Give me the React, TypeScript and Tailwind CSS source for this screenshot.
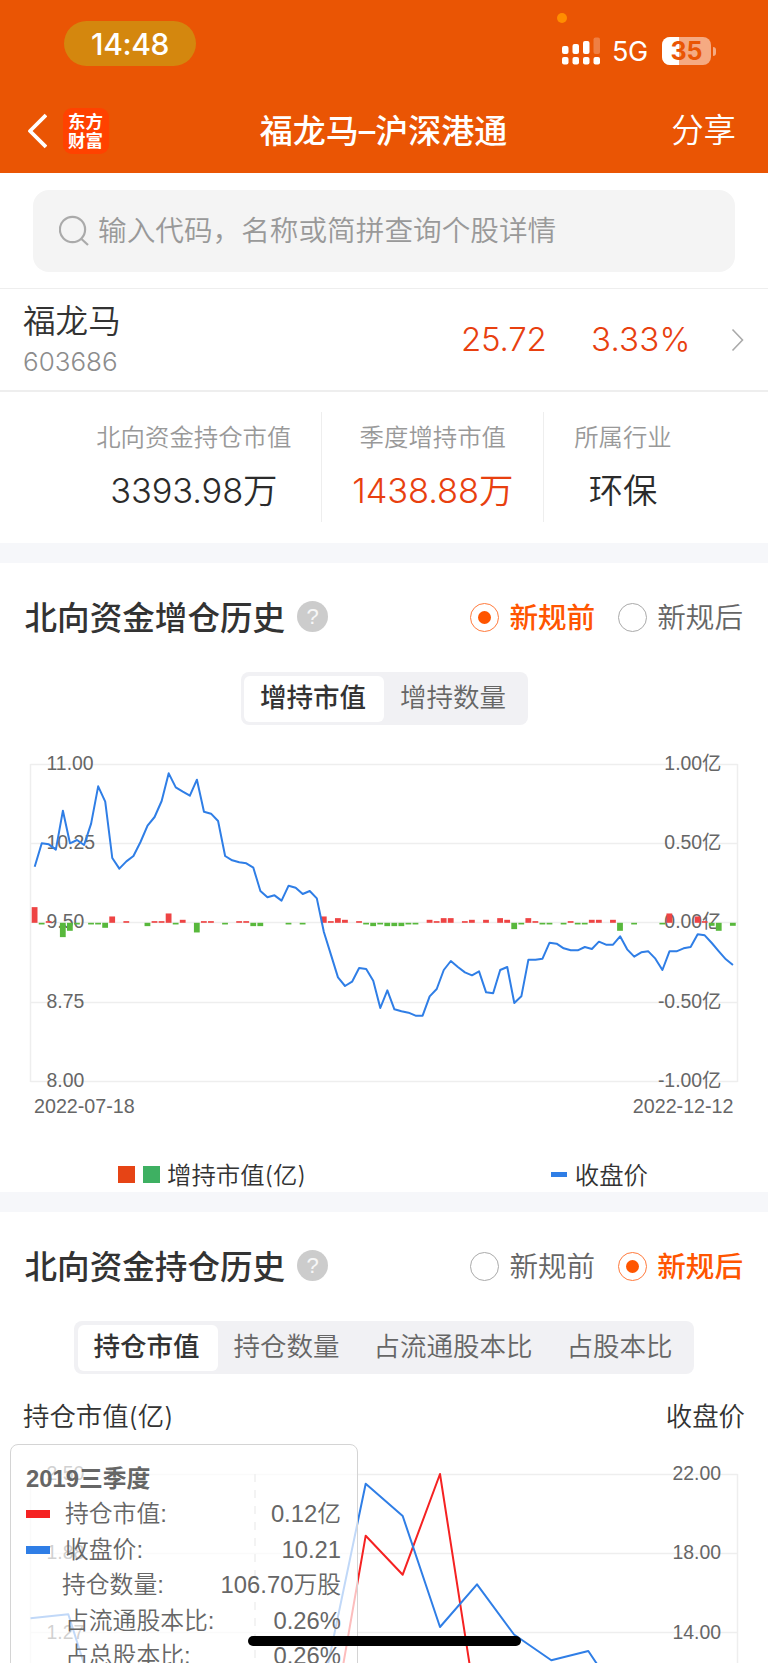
import { useState } from 'react';
import clsx from 'clsx';

const HELVETICA = "font-['Liberation_Sans','Noto_Sans_CJK_SC',sans-serif]";

// close price line, one point per trading day (chart units, 3 per px)
const CLOSE = [
  380, 310, 313, 329, 212, 310, 300, 315, 251, 139, 185, 354, 386, 364, 348, 306, 257, 231, 183, 100,
  142, 155, 167, 119, 215, 221, 243, 348, 361, 367, 370, 383, 453, 472, 466, 482, 437, 443, 462, 453,
  475, 576, 644, 712, 738, 725, 684, 687, 722, 804, 751, 808, 814, 818, 827, 827, 769, 747, 690, 663,
  681, 697, 706, 694, 757, 760, 690, 681, 789, 769, 659, 659, 656, 608, 611, 625, 631, 631, 621, 627,
  605, 614, 614, 589, 628, 650, 637, 634, 656, 690, 634, 634, 625, 621, 583, 586, 609, 634, 658, 675,
];

// [day index, signed bar height]
const CHANGES: [number, number][] = [
  [0, 47], [1, -5], [2, 5], [4, -43], [5, -24], [6, -5], [8, -5], [9, -5], [10, -15], [11, 19],
  [13, 5], [16, -10], [17, 5], [18, 5], [19, 28], [20, -5], [21, 9], [23, -29], [24, 5], [25, 5],
  [27, -5], [29, 5], [30, 5], [31, -10], [32, -10], [36, -5], [38, -5], [41, 19], [42, 5], [43, 14],
  [44, 9], [46, 5], [47, -5], [48, -10], [49, -5], [50, -10], [51, -10], [52, -10], [53, -5], [54, -5],
  [56, 9], [57, 5], [58, 14], [59, 14], [61, 5], [62, 9], [64, 9], [66, 14], [67, 9], [68, -19],
  [69, -5], [70, 14], [71, 5], [72, -5], [73, -5], [75, -5], [76, 5], [77, -5], [78, -5], [79, 9],
  [80, 9], [82, 9], [83, -24], [85, -5], [89, -5], [90, 28], [94, 19], [95, 5], [96, -9], [97, -24],
  [99, -9],
];

const dayX = (i: number) => 34.7 + i * 7.053;

const Header = () => (
  <header className="h-[173px] bg-[#ea5504] text-white">
    <div className="flex h-[88px] items-start justify-between pl-16 pr-[52px]">
      <div className="mt-[21px] flex h-[45px] w-[132px] items-center justify-center rounded-full bg-[#d4870e] pt-[2px] text-[30px] font-medium tracking-[-0.4px]">
        14:48
      </div>
      <div className="relative mt-[37px] flex h-7 items-center">
        <span className="absolute -left-[5px] -top-6 size-[10px] rounded-full bg-[#ff8d00]" />
        <svg width="40" height="28" viewBox="0 0 40 28" fill="#fff">
          <rect x="0" y="9" width="6.5" height="8" rx="2" />
          <rect x="10.5" y="7" width="6.5" height="10" rx="2" />
          <rect x="21" y="4" width="6.5" height="13" rx="2" />
          <rect x="31.5" y="0.5" width="6.5" height="16.5" rx="2" opacity="0.25" />
          <rect x="0" y="20" width="6.5" height="7.5" rx="2" />
          <rect x="10.5" y="20" width="6.5" height="7.5" rx="2" />
          <rect x="21" y="20" width="6.5" height="7.5" rx="2" />
          <rect x="31.5" y="20" width="6.5" height="7.5" rx="2" />
        </svg>
        <span className="ml-[10px] w-[38px] pt-[2px] text-[27px] leading-7 tracking-[-0.3px]">5G</span>
        <div className="relative ml-3 flex h-7 w-[49px] items-center justify-center overflow-hidden rounded-[8px] bg-white/50">
          <span className="absolute inset-y-0 left-0 w-[17px] bg-white" />
          <span className="relative text-[25px] font-bold leading-7 text-[#ea5504]">35</span>
        </div>
        <span className="ml-[2px] h-[9px] w-[3px] rounded-r-full bg-white/50" />
      </div>
    </div>
    <div className="flex h-[85px] items-center justify-between pl-[27px] pr-8">
      <div className="flex w-[84px] items-center">
        <svg width="20" height="36" viewBox="0 0 20 36" fill="none" stroke="#fff" strokeWidth="3.8" strokeLinejoin="round">
          <path d="M19 2 L3 18 L19 34" />
        </svg>
        <div className="ml-[15.5px] flex size-[46px] shrink-0 flex-col items-center justify-center rounded-[9px] bg-[#ff4200] text-[17.5px] font-bold leading-[19px]">
          <span>东方</span>
          <span>财富</span>
        </div>
      </div>
      <h1 className="text-[33px] font-medium leading-10">福龙马–沪深港通</h1>
      <button className="w-[80px] whitespace-nowrap text-right text-[32.4px] font-[350] leading-10">分享</button>
    </div>
  </header>
);

const SearchBox = () => (
  <div className="border-b border-[#eee] px-[33px] pb-4 pt-[17px]">
    <div className="flex h-[82px] items-center rounded-[16px] bg-[#f4f4f4] pl-[26px] text-[28.65px] font-[350] text-[#999]">
      <svg width="32" height="32" viewBox="0 0 32 32" fill="none" stroke="#aaa" strokeWidth="2.2">
        <circle cx="13.5" cy="14.5" r="12.6" />
        <path d="M22.5 24 L29 30" />
      </svg>
      <span className="ml-[7px] pt-px">输入代码，名称或简拼查询个股详情</span>
    </div>
  </div>
);

const Quote = () => (
  <div className="flex h-[103px] items-center border-b-2 border-[#eee] pl-[23px] pr-6">
    <div className="flex-1">
      <div className="pt-px text-[32.6px] font-[350] leading-[42px] text-[#333]">福龙马</div>
      <div className="pt-[2px] text-[26px] font-light leading-9 text-[#8c8c8c]">603686</div>
    </div>
    <div className="flex items-center text-[33px] font-[350] text-[#e8400f]">
      <span className="w-[85px] tracking-[-0.2px]">25.72</span>
      <span className="ml-[45px] w-[99px] tracking-[0.2px]">3.33%</span>
      <svg className="ml-[41px]" width="13" height="24" viewBox="0 0 13 24" fill="none" stroke="#aaa" strokeWidth="1.6">
        <path d="M1.5 1.5 L11.5 12 L1.5 22.5" />
      </svg>
    </div>
  </div>
);

const STATS = [
  { label: '北向资金持仓市值', value: '3393.98万', tone: 'text-[#2b2b2b]' },
  { label: '季度增持市值', value: '1438.88万', tone: 'text-[#e8400f]' },
  { label: '所属行业', value: '环保', tone: 'text-[#2b2b2b]' },
];

const Stats = () => (
  <div className="flex h-[151px] justify-center pt-5">
    {STATS.map((s, i) => (
      <div
        key={s.label}
        className={clsx('flex h-[110px] flex-col items-center px-[30px] font-[350]', i > 0 && 'border-l border-[#eee]')}
      >
        <div className="mt-[7px] text-[24.4px] leading-9 text-[#999]">{s.label}</div>
        <div className={clsx('mt-[14px] whitespace-nowrap text-[34.4px] leading-[44px] tracking-[-0.1px]', s.tone)}>{s.value}</div>
      </div>
    ))}
  </div>
);

interface RadioProps {
  label: string;
  checked: boolean;
  onClick: () => void;
}

const Radio = ({ label, checked, onClick }: RadioProps) => (
  <button onClick={onClick} className="flex items-center">
    <span
      className={clsx(
        'flex size-[29px] items-center justify-center rounded-full border',
        checked ? 'border-[#ff7a3c]' : 'border-[#aaa]',
      )}
    >
      {checked && <span className="size-[13px] rounded-full bg-[#ff5500]" />}
    </span>
    <span
      className={clsx(
        'ml-[10px] pt-px text-[28.6px] leading-10',
        checked ? 'font-medium text-[#ff5500]' : 'font-[350] text-[#666]',
      )}
    >
      {label}
    </span>
  </button>
);

const SectionHead = ({ title, initial }: { title: string; initial: string }) => {
  const [rule, setRule] = useState(initial);
  return (
    <div className="flex h-[109px] items-center pl-[24.5px] pr-[25px]">
      <h2 className="pt-px text-[32.6px] font-medium leading-[44px] text-[#333]">{title}</h2>
      <span
        className={clsx(
          'mb-[3px] ml-3 flex size-[31px] items-center justify-center rounded-full bg-[#ccc] text-[22px] text-white/85',
          HELVETICA,
        )}
      >
        ?
      </span>
      <div className="ml-auto flex gap-[23px]">
        {['新规前', '新规后'].map((label) => (
          <Radio key={label} label={label} checked={rule === label} onClick={() => setRule(label)} />
        ))}
      </div>
    </div>
  );
};

const Tabs = ({ items }: { items: string[] }) => {
  const [active, setActive] = useState(items[0]);
  return (
    <div className="flex justify-center">
      <div className="flex h-[53px] rounded-[8px] bg-[#f1f1f4] p-[3.5px]">
        {items.map((item) => (
          <button
            key={item}
            onClick={() => setActive(item)}
            className={clsx(
              'rounded-[6px] pb-[3px] pl-4 pr-[18px] text-[26.5px] leading-[43px]',
              active === item ? 'bg-white font-medium text-[#333]' : 'font-[350] text-[#666]',
            )}
          >
            {item}
          </button>
        ))}
      </div>
    </div>
  );
};

const GRID = [24.5, 103.5, 182.5, 262.5, 341.5];
const PRICE_TICKS = ['11.00', '10.25', '9.50', '8.75', '8.00'];
const VALUE_TICKS = ['1.00亿', '0.50亿', '0.00亿', '-0.50亿', '-1.00亿'];

const ChangeChart = () => (
  <svg className={HELVETICA} width="768" height="400" viewBox="0 0 768 400" fontSize="19.4" fill="#666">
    <g stroke="#eee" strokeWidth="1.5">
      {GRID.map((y) => (
        <line key={y} x1="30.5" x2="737.5" y1={y} y2={y} />
      ))}
      <line x1="30.5" x2="30.5" y1="24" y2="342" />
      <line x1="737.5" x2="737.5" y1="24" y2="342" />
    </g>
    {GRID.map((y, i) => (
      <g key={y}>
        <text x="46.5" y={y + 5.7}>{PRICE_TICKS[i]}</text>
        <text x="721.5" y={y + 5.7} textAnchor="end">{VALUE_TICKS[i]}</text>
      </g>
    ))}
    {CHANGES.map(([i, h]) => (
      <rect
        key={i}
        x={dayX(i) - 3}
        y={h > 0 ? 182.8 - h / 3 : 182.8}
        width="5.8"
        height={Math.abs(h) / 3}
        fill={h > 0 ? '#ee4444' : '#58b83c'}
      />
    ))}
    <polyline
      points={CLOSE.map((y, i) => `${dayX(i)},${y / 3}`).join(' ')}
      fill="none"
      stroke="#2f7ee6"
      strokeWidth="2"
      strokeLinejoin="round"
    />
    <text x="34" y="373.3" fontSize="19.7">2022-07-18</text>
    <text x="733.5" y="373.3" fontSize="19.7" textAnchor="end">2022-12-12</text>
  </svg>
);

const Legend = () => (
  <div className="flex h-[35px] items-center text-[24.4px] font-[350] leading-9 text-[#333]">
    <span className="ml-[118px] size-[17px] bg-[#e64415]" />
    <span className="ml-[7.5px] size-[17px] bg-[#3eb062]" />
    <span className="ml-[7.5px]">增持市值(亿)</span>
    <span className="ml-auto h-[5px] w-4 bg-[#2f7ee6]" />
    <span className="ml-2 mr-[120px]">收盘价</span>
  </div>
);

const HoldingChart = () => (
  <svg className={HELVETICA} width="768" height="223" viewBox="0 0 768 223" fontSize="19.4" fill="#666">
    <g stroke="#eee" strokeWidth="1.5">
      <line x1="30.5" x2="737.5" y1="34.5" y2="34.5" />
      <line x1="30.5" x2="737.5" y1="113.5" y2="113.5" />
      <line x1="30.5" x2="737.5" y1="192.5" y2="192.5" />
      <line x1="30.5" x2="30.5" y1="34" y2="223" />
      <line x1="737.5" x2="737.5" y1="34" y2="223" />
    </g>
    <line x1="255" x2="255" y1="34" y2="223" stroke="#ccc" strokeWidth="1.5" strokeDasharray="8 8" />
    <text x="46.5" y="40">2.50</text>
    <text x="46.5" y="119">1.88</text>
    <text x="46.5" y="198.5">1.27</text>
    <text x="721" y="40" textAnchor="end">22.00</text>
    <text x="721" y="119.3" textAnchor="end">18.00</text>
    <text x="721" y="198.5" textAnchor="end">14.00</text>
    <g fill="none" strokeWidth="2" strokeLinejoin="round">
      <polyline
        stroke="#f52222"
        points="328.3,310 365.7,95.7 402.7,134.7 440,34 477,272"
      />
      <polyline
        stroke="#2f7ee6"
        points="30.5,178.3 68.3,174.3 105.3,291 328.3,223 365.7,43.7 402.7,76 440,187 477,144.3 514,194.5 551.3,220.3 588.3,211 625.7,267"
      />
    </g>
  </svg>
);

const TOOLTIP_ROWS = [
  { swatch: 'bg-[#f52222]', label: '持仓市值:', value: '0.12亿', pad: 'pl-[15px]' },
  { swatch: 'bg-[#2f7ee6]', label: '收盘价:', value: '10.21', pad: 'pl-[15px]' },
  { swatch: '', label: '持仓数量:', value: '106.70万股', pad: 'pl-3' },
  { swatch: '', label: '占流通股本比:', value: '0.26%', pad: 'pl-[15px]' },
  { swatch: '', label: '占总股本比:', value: '0.26%', pad: 'pl-[15px]' },
];

const Tooltip = () => (
  <div
    className={clsx(
      'absolute left-[10px] top-1 h-[300px] w-[348px] rounded-[8px] border border-[#d4d4d4] bg-white/70 px-[15px] pt-[15.5px] text-[23.8px] text-[#666]',
      HELVETICA,
    )}
  >
    <div className="h-9 font-bold leading-9">2019三季度</div>
    {TOOLTIP_ROWS.map((row) => (
      <div key={row.label} className="flex h-[35.5px] items-center font-[350] leading-9">
        <span className={clsx('h-2 w-6', row.swatch)} />
        <span className={row.pad}>{row.label}</span>
        <span className="ml-auto mr-px">{row.value}</span>
      </div>
    ))}
  </div>
);

function App() {
  return (
    <div
      lang="zh-CN"
      className="relative h-[1663px] w-[768px] overflow-hidden bg-white font-['Inter','Noto_Sans_CJK_SC',sans-serif]"
    >
      <Header />
      <SearchBox />
      <Quote />
      <Stats />

      <section className="border-t-[20px] border-[#f6f7fa]">
        <SectionHead title="北向资金增仓历史" initial="新规前" />
        <Tabs items={['增持市值', '增持数量']} />
        <div className="mt-[15px]">
          <ChangeChart />
        </div>
        <div className="mt-[17px]">
          <Legend />
        </div>
      </section>

      <section className="border-t-[20px] border-[#f6f7fa]">
        <SectionHead title="北向资金持仓历史" initial="新规后" />
        <Tabs items={['持仓市值', '持仓数量', '占流通股本比', '占股本比']} />
        <div className="flex h-[66px] items-center justify-between px-[23px] pt-5 text-[26.4px] font-[350] text-[#333]">
          <span>持仓市值(亿)</span>
          <span>收盘价</span>
        </div>
        <div className="relative">
          <HoldingChart />
          <Tooltip />
        </div>
      </section>

      {/* home indicator */}
      <div className="absolute bottom-[17px] left-[248px] h-[10px] w-[273px] rounded-full bg-black" />
    </div>
  );
}

export default App;
